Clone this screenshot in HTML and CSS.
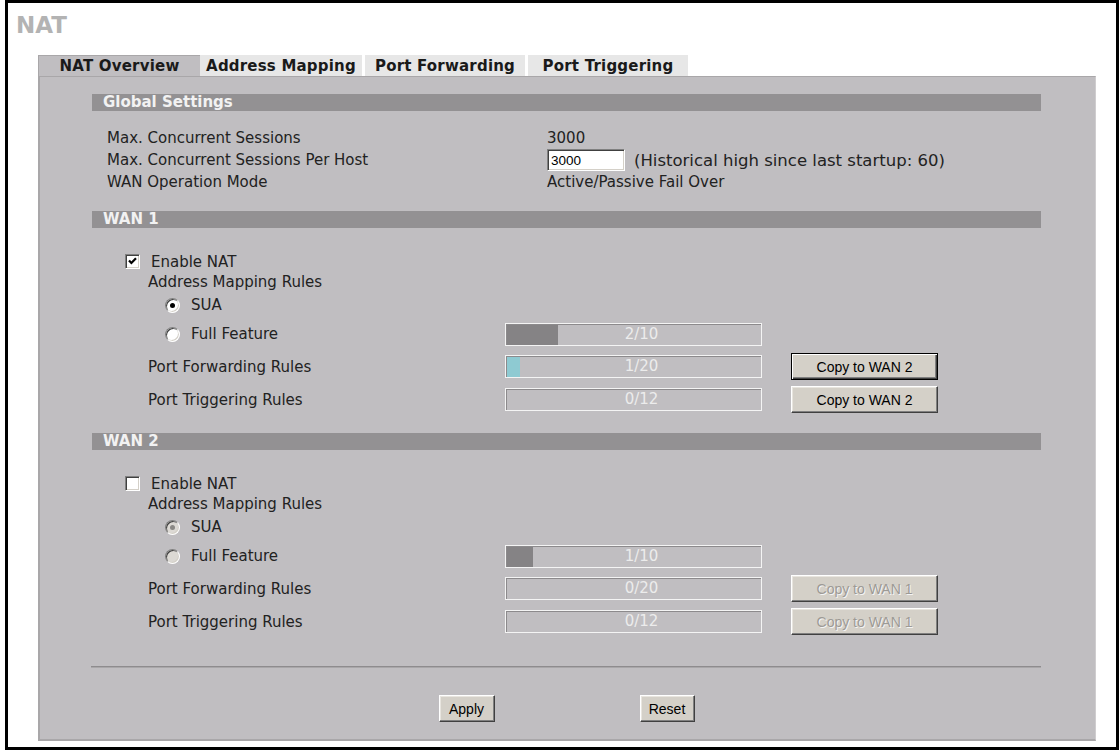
FILE: index.html
```html
<!DOCTYPE html>
<html lang="en">
  <head>
    <meta charset="UTF-8" />
    <title>NAT</title>
    <link rel="stylesheet" href="styles.css">
  </head>
  <body>
    <div class="frame">
      <h1 class="title">NAT</h1>
      <div class="tabs">
        <div class="tab active">NAT Overview</div>
        <div class="tab">Address Mapping</div>
        <div class="tab sep-left">Port Forwarding</div>
        <div class="tab sep-left">Port Triggering</div>
      </div>
      <div class="panel">
        <div class="sect">Global Settings</div>
        <div class="global">
          <div class="grow"><span class="glabel">Max. Concurrent Sessions</span><span>3000</span></div>
          <div class="grow">
            <span class="glabel">Max. Concurrent Sessions Per Host</span>
            <input class="num" type="text" value="3000">
            <span class="hist">(Historical high since last startup: 60)</span>
          </div>
          <div class="grow"><span class="glabel">WAN Operation Mode</span><span>Active/Passive Fail Over</span></div>
        </div>

        <div class="sect">WAN 1</div>
        <div class="wan">
          <div class="row h-check">
            <div class="lab in1">
              <span class="check"><svg width="9" height="9" viewBox="0 0 9 9"><path d="M1 3.4 L3.4 6 L8 1.2" fill="none" stroke="#000" stroke-width="2.2"/></svg></span>Enable NAT
            </div>
          </div>
          <div class="row h-map"><div class="lab in2">Address Mapping Rules</div></div>
          <div class="row h-sua"><div class="lab in3"><span class="radio on"></span>SUA</div></div>
          <div class="row h-full">
            <div class="lab in3"><span class="radio"></span>Full Feature</div>
            <div class="meter"><span class="fill" style="width: 20%"></span><span class="mtext">2/10</span></div>
          </div>
          <div class="row h-rule">
            <div class="lab in2">Port Forwarding Rules</div>
            <div class="meter"><span class="fill cyan" style="width: 5%"></span><span class="mtext">1/20</span></div>
            <button class="btn default">Copy to WAN 2</button>
          </div>
          <div class="row h-rule">
            <div class="lab in2">Port Triggering Rules</div>
            <div class="meter"><span class="mtext">0/12</span></div>
            <button class="btn">Copy to WAN 2</button>
          </div>
        </div>

        <div class="sect">WAN 2</div>
        <div class="wan">
          <div class="row h-check">
            <div class="lab in1"><span class="check"></span>Enable NAT</div>
          </div>
          <div class="row h-map"><div class="lab in2">Address Mapping Rules</div></div>
          <div class="row h-sua"><div class="lab in3"><span class="radio off on"></span>SUA</div></div>
          <div class="row h-full">
            <div class="lab in3"><span class="radio off"></span>Full Feature</div>
            <div class="meter"><span class="fill" style="width: 10%"></span><span class="mtext">1/10</span></div>
          </div>
          <div class="row h-rule">
            <div class="lab in2">Port Forwarding Rules</div>
            <div class="meter"><span class="mtext">0/20</span></div>
            <button class="btn" disabled>Copy to WAN 1</button>
          </div>
          <div class="row h-rule">
            <div class="lab in2">Port Triggering Rules</div>
            <div class="meter"><span class="mtext">0/12</span></div>
            <button class="btn" disabled>Copy to WAN 1</button>
          </div>
        </div>

        <div class="sep"></div>
        <div class="actions">
          <button class="btn small">Apply</button>
          <button class="btn small reset">Reset</button>
        </div>
      </div>
    </div>
  </body>
</html>
```

FILE: styles.css
```css
body {
  margin: 0;
  background: #fff;
  font-family: "DejaVu Sans", Verdana, sans-serif;
  font-size: 15px;
  color: #222;
}
.frame {
  margin-left: 5px;
  width: 1114px;
  height: 750px;
  box-sizing: border-box;
  border: 3px solid #000;
  padding-top: 9px;
}
.title {
  margin: 0 0 17px 8px;
  font: bold 23px/26px "DejaVu Sans", Verdana, sans-serif;
  color: #b3b3b3;
}

.tabs {
  display: flex;
  margin-left: 30px;
  height: 21px;
}
.tab {
  width: 162px;
  box-sizing: border-box;
  text-align: center;
  font-weight: bold;
  letter-spacing: 0.2px;
  line-height: 22px;
  background: #e7e7e7;
  color: #1a1a1a;
}
.tab.sep-left {
  width: 160px;
  margin-left: 3px;
}
.tab.active {
  background: #c0bec1;
  border-top: 1px solid #a9a7a9;
  border-left: 1px solid #a9a7a9;
  line-height: 21px;
}

.panel {
  margin-left: 30px;
  width: 1058px;
  box-sizing: border-box;
  background: #c0bec1;
  border-top: 1px solid #a9a7a9;
  border-left: 2px solid #a9a7a9;
  border-bottom: 2px solid #a9a7a9;
  border-right: 1px solid #cfcdcf;
  padding: 17px 54px 17px 52px;
}
.sect {
  height: 17px;
  line-height: 17px;
  padding-left: 11px;
  background: #939193;
  color: #f2f2f2;
  font-weight: bold;
}

.global {
  margin: 16px 0 18px;
}
.grow {
  display: flex;
  align-items: center;
  height: 22px;
  padding-left: 15px;
}
.glabel {
  width: 440px;
  flex: none;
}
.num {
  width: 78px;
  height: 22px;
  box-sizing: border-box;
  margin: 0;
  padding: 0 3px;
  border: 1px solid;
  border-color: #808080 #fff #fff #808080;
  box-shadow: inset 1px 1px #404040, inset -1px -1px #d4d0c8;
  background: #fff;
  font: 13.5px "Liberation Sans", Arial, sans-serif;
  color: #000;
  outline: none;
}
.hist {
  margin-left: 9px;
  font-size: 16.5px;
}

.wan {
  margin: 23px 0 17px;
}
.row {
  display: flex;
  align-items: center;
}
.h-check { height: 21px; }
.h-map { height: 20px; }
.h-sua { height: 26px; }
.h-full { height: 32px; }
.h-rule { height: 33px; }

.lab {
  width: 413px;
  flex: none;
  box-sizing: border-box;
  display: flex;
  align-items: center;
}
.in1 { padding-left: 33px; }
.in2 { padding-left: 56px; }
.in3 { padding-left: 73px; }

.check {
  width: 15px;
  height: 15px;
  margin-right: 11px;
  box-sizing: border-box;
  display: flex;
  align-items: center;
  justify-content: center;
  background: #fff;
  border: 1px solid;
  border-color: #808080 #fff #fff #808080;
  box-shadow: inset 1px 1px #404040, inset -1px -1px #d4d0c8;
}
.radio {
  width: 15px;
  height: 15px;
  margin-right: 11px;
  box-sizing: border-box;
  display: flex;
  align-items: center;
  justify-content: center;
  border-radius: 50%;
  background: #fff;
  border: 1px solid;
  border-color: #808080 #fff #fff #808080;
  box-shadow: inset 1px 1px #404040, inset -1px -1px #d4d0c8;
}
.radio.on::after {
  content: "";
  width: 5px;
  height: 5px;
  border-radius: 50%;
  background: #000;
}
.radio.off {
  background: #dcd9d4;
}
.radio.off.on::after {
  background: #8a8885;
}

.meter {
  width: 257px;
  height: 23px;
  flex: none;
  box-sizing: border-box;
  display: grid;
  grid-template-columns: 1fr;
  border: 1px solid #f4f4f4;
  box-shadow: inset 1px 1px 0 #8c8a8c;
}
.meter > span {
  grid-area: 1 / 1;
}
.fill {
  justify-self: start;
  margin: 1px 0 0 1px;
  background: #858385;
}
.fill.cyan {
  background: #8ecad2;
}
.mtext {
  text-align: center;
  padding-left: 16px;
  line-height: 21px;
  color: #ececec;
}

.btn {
  margin: 0 0 0 29px;
  width: 147px;
  height: 27px;
  padding: 0;
  box-sizing: border-box;
  background: #d4d0c8;
  border: 1px solid;
  border-color: #fff #404040 #404040 #fff;
  box-shadow: inset -1px -1px #808080, inset 1px 1px #e8e5df;
  font: 14px "Liberation Sans", Arial, sans-serif;
  color: #000;
}
.btn.default {
  border-color: #000;
  box-shadow: inset 1px 1px #fff, inset -1px -1px #404040, inset -2px -2px #808080;
}
.btn:disabled {
  color: #9d9a95;
  text-shadow: 1px 1px 0 #f4f4f4;
}

.sep {
  margin: 28px 0 0 -1px;
  border-top: 1px solid #8e8c8e;
  border-bottom: 1px solid #a9a7a9;
}
.actions {
  display: flex;
  justify-content: center;
  gap: 145px;
  margin-top: 27px;
}
.btn.small {
  margin: 0;
  width: 56px;
}
.btn.reset {
  width: 55px;
}
```
